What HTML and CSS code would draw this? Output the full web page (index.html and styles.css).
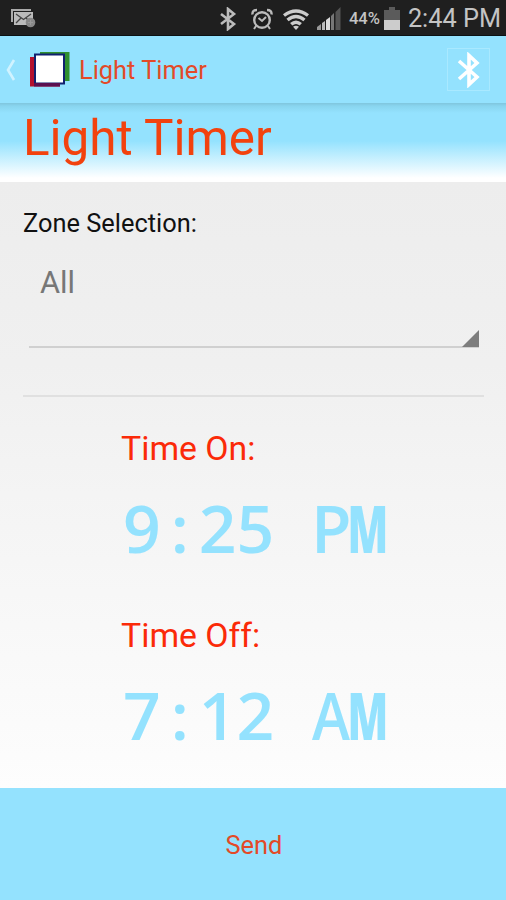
FILE: index.html
```html
<!DOCTYPE html>
<html lang="en">
<head>
    <meta charset="UTF-8">
    <meta name="viewport" content="width=device-width, initial-scale=1.0">
    <title>Light Timer</title>
    <link rel="stylesheet" href="styles.css">
</head>
<body>
    <div class="status-bar">
        <svg class="mail" width="26" height="20" viewBox="0 0 26 20">
            <path d="M1 14V1h20v2H3v11z" fill="#aaa"/>
            <rect x="4" y="4" width="19" height="13" fill="#bbb"/>
            <path d="M6 6l7.500 5.500L21 6M6 15l5-5M21 15l-5-5" fill="none" stroke="#444" stroke-width="1.300"/>
            <circle cx="20.500" cy="14.500" r="4.800" fill="#888"/>
            <path d="M18 14.500h5M20.500 12v5" stroke="#999"/>
        </svg>
        <div class="status-icons">
            <svg width="18" height="24" viewBox="0 0 18 24">
                <path d="M2 7l13 10-6 5V2l6 5L2 17" fill="none" stroke="#bbb" stroke-width="2.600"/>
            </svg>
            <svg width="22" height="24" viewBox="0 0 22 24">
                <circle cx="11" cy="13" r="7.800" fill="none" stroke="#bbb" stroke-width="2.400"/>
                <path d="M7.500 11l3.500 3 4-4M5 19l-2 3M17 19l2 3" fill="none" stroke="#bbb" stroke-width="2"/>
                <path d="M1.500 7.500Q1 3 6 3M20.500 7.500Q21 3 16 3" fill="none" stroke="#bbb" stroke-width="2.400"/>
            </svg>
            <svg width="28" height="24" viewBox="0 0 28 24">
                <g fill="none" stroke="#ccc" stroke-width="3.400">
                    <path d="M2 8.500Q14-.5 26 8.500"/>
                    <path d="M5.500 13Q14 6 22.500 13"/>
                    <path d="M9.200 17.300Q14 13 18.800 17.300"/>
                </g>
                <path d="M11 19.800q3-2 6 0l-3 3.200z" fill="#ccc"/>
            </svg>
            <svg width="26" height="24" viewBox="0 0 26 24">
                <path d="M1 23v-3l4-3v6z" fill="#999"/>
                <path d="M6 23v-7l3-2v9z" fill="#bbb"/>
                <path d="M10 23V13l4-3v13z" fill="#ddd"/>
                <path d="M15 23V9l3-3v17z" fill="#777"/>
                <path d="M19.500 23V5l5-5v23z" fill="#555"/>
            </svg>
            <span class="battery-text">44%</span>
            <svg class="battery" width="16" height="24" viewBox="0 0 16 24">
                <path d="M0 3h5V0h6v3h5v10H0z" fill="#5b5b5b"/>
                <path d="M0 13h16v10H0z" fill="#ccc"/>
            </svg>
            <span class="clock">2:44 PM</span>
        </div>
    </div>

    <div class="action-bar">
        <svg class="back" width="10" height="22" viewBox="0 0 10 22">
            <path d="M8 1L2 11l6 10" fill="none" stroke="#d0f3ff" stroke-width="2.600"/>
        </svg>
        <svg class="logo" width="40" height="36" viewBox="0 0 40 36">
            <path d="M10 0h29.500v29H10z" fill="#2f8f2f"/>
            <path d="M0 5h30v29.500H0z" fill="#b3102d"/>
            <path d="M4 1.500h31v31H4z" fill="#10206f"/>
            <path d="M4 31h26v3.500H4z" fill="#5a1050"/>
            <path d="M6 3.500h27v27H6z" fill="#fff"/>
        </svg>
        <span class="bar-title">Light Timer</span>
        <button class="bluetooth">
            <svg width="24" height="36" viewBox="0 0 24 36">
                <path d="M2 9l18 16-8 7.500V3.500L20 11 2 27" fill="none" stroke="#fff" stroke-width="3.600"/>
            </svg>
        </button>
    </div>

    <h1 class="page-title">Light Timer</h1>

    <div class="content">
        <div class="zone-label">Zone Selection:</div>
        <div class="spinner">All</div>
        <div class="divider"></div>
        <div class="timer">
            <div class="timer-label">Time On:</div>
            <div class="timer-value">9<span class="cell">:</span>25<span class="cell"> </span><span class="cell">P</span><span class="cell wide">M</span></div>
        </div>
        <div class="timer">
            <div class="timer-label">Time Off:</div>
            <div class="timer-value">7<span class="cell">:</span>12<span class="cell"> </span><span class="cell narrow">A</span><span class="cell wide">M</span></div>
        </div>
    </div>

    <button class="send">Send</button>
</body>
</html>
```
FILE: styles.css
```css
* {
    box-sizing: border-box;
}
body {
    margin: 0;
    height: 900px;
    display: flex;
    flex-direction: column;
    overflow: hidden;
    font-family: Roboto, sans-serif;
    background: #fff;
}
button {
    border: none;
    padding: 0;
    font-family: inherit;
    background: none;
}
.status-bar {
    height: 36px;
    flex: none;
    display: flex;
    justify-content: space-between;
    padding: 0 5px 0 10px;
    background: #1f1f1f;
    border-bottom: 1px solid #0c1214;
    color: #c4c4c4;
}
.mail {
    margin-top: 8px;
}
.status-icons {
    display: flex;
    align-items: center;
    padding-top: 2px;
}
.status-icons svg {
    flex: none;
    margin-right: 9px;
}
.status-icons svg:nth-child(1) {
    margin-right: 14px;
}
.status-icons svg:nth-child(3) {
    margin-right: 6px;
}
.battery-text {
    width: 35px;
    margin-left: -2px;
    font-size: 16.6px;
    font-weight: 500;
    line-height: 24px;
}
.status-icons .battery {
    margin-right: 8px;
}
.clock {
    font-size: 25.3px;
    line-height: 30px;
    white-space: nowrap;
}
.action-bar {
    height: 67px;
    flex: none;
    display: flex;
    align-items: center;
    padding: 0 16px 0 6px;
    background: #94e2fe;
}
.logo {
    margin: 0 9px 0 14px;
}
.bar-title {
    padding-top: 1px;
    font-size: 25.4px;
    color: #e34a28;
}
.bluetooth {
    display: flex;
    align-items: center;
    justify-content: center;
    width: 43px;
    height: 43px;
    margin-left: auto;
    border: 1px solid #a9e9ff;
}
.page-title {
    height: 79px;
    flex: none;
    margin: 0;
    padding: 6px 0 0 23px;
    font-size: 49.4px;
    font-weight: 400;
    line-height: 59px;
    color: #f2420e;
    background: linear-gradient(#7fc5dd 0, #89d5ef 3px, #94e2fe 10px, #94e2fe 38px, #fff 75px);
}
.content {
    height: 606px;
    flex: none;
    padding: 24px 22px 0 23px;
    background: linear-gradient(#ededed, #f0f0f0 30%, #fdfdfd);
}
.zone-label {
    font-size: 25.4px;
    line-height: 34px;
    color: #111;
}
.spinner {
    position: relative;
    height: 93px;
    margin: 15px 5px 0 6px;
    padding: 8px 0 0 11px;
    font-size: 30.8px;
    line-height: 40px;
    color: #777;
    border-bottom: 2px solid #d0d0d0;
}
.spinner::after {
    content: "";
    position: absolute;
    right: 0;
    bottom: -1px;
    border-left: 17px solid transparent;
    border-bottom: 17px solid #7d7d7d;
}
.divider {
    height: 2px;
    margin-top: 47px;
    background: #e0e0e0;
}
.timer {
    height: 187px;
    padding: 32px 0 0 98px;
}
.timer-label {
    font-size: 33.8px;
    line-height: 40px;
    color: #fb2a08;
}
.timer-value {
    margin: 18px 0 0 2px;
    font-family: "Open Sans", sans-serif;
    font-size: 66px;
    font-weight: 600;
    line-height: 80px;
    white-space: nowrap;
    color: #94e2fe;
}
.cell {
    display: inline-flex;
    justify-content: center;
    width: 38px;
}
.narrow {
    transform: scaleX(0.87);
}
.wide {
    font-weight: 800;
    transform: translateX(-1px) scaleX(0.64);
}
.send {
    height: 112px;
    flex: none;
    padding: 2px 0 0 2px;
    font-size: 25.4px;
    color: #e34a28;
    background: #94e2fe;
}
```
